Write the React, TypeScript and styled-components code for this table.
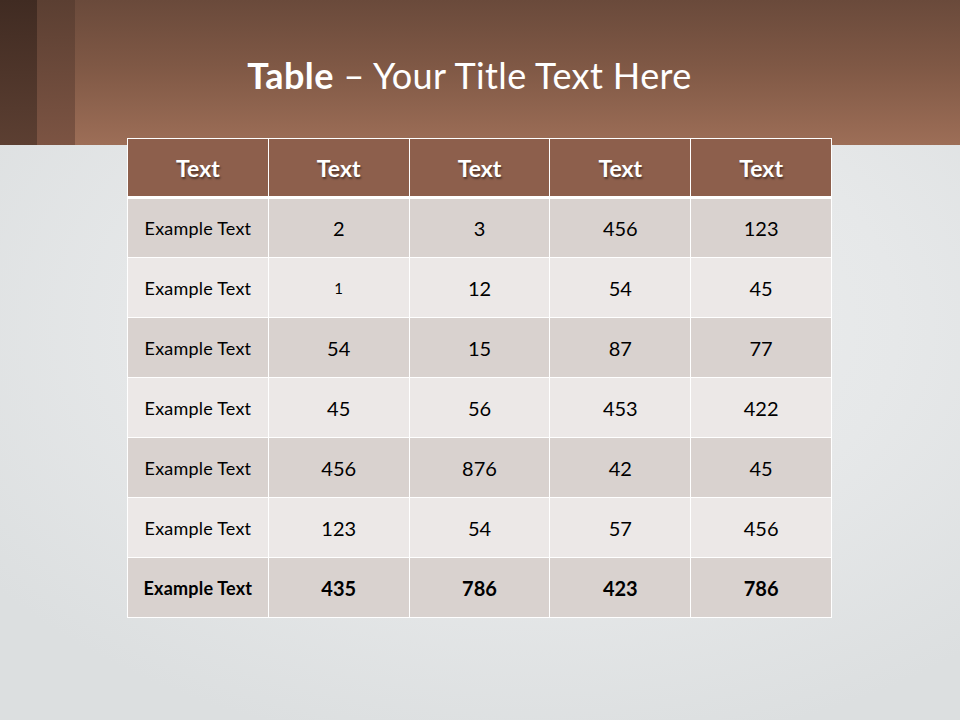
import styled, { createGlobalStyle } from "styled-components";

const GlobalStyle = createGlobalStyle`
  html, body {
    margin: 0;
    padding: 0;
  }
  body {
    font-family: Lato, "Open Sans", sans-serif;
  }
`;

const Slide = styled.div`
  width: 960px;
  height: 720px;
  overflow: hidden;
  display: flex;
  flex-direction: column;
  background: radial-gradient(ellipse 70% 60% at 55% 45%, #eef0f0 0%, #e6e8e9 55%, #dcdfe0 100%);
`;

const Band = styled.div`
  height: 145px;
  display: flex;
  background: linear-gradient(180deg, #6a4a3b 0%, #7f5845 45%, #9d6e57 100%);
`;

const Stripe = styled.div<{ $dark?: boolean }>`
  width: ${(p) => (p.$dark ? "37px" : "38px")};
  flex-shrink: 0;
  background: ${(p) =>
    p.$dark
      ? "linear-gradient(180deg, #402b22 0%, #5c3f32 100%)"
      : "linear-gradient(180deg, #5b3f32 0%, #7c5443 100%)"};
`;

const TitleArea = styled.div`
  flex: 1;
  display: flex;
  justify-content: center;
  padding-top: 54px;
  padding-right: 96px;
`;

const Title = styled.h1`
  margin: 0;
  font-size: 36px;
  line-height: 42px;
  font-weight: 400;
  color: #ffffff;
  letter-spacing: 0.4px;
  b {
    font-weight: 700;
  }
`;

const TableWrap = styled.div`
  margin-top: -7px;
  padding-left: 127px;
`;

const Grid = styled.table`
  border-collapse: collapse;
  table-layout: fixed;
  width: 705px;
  border: 1px solid #ffffff;
`;

const HeadCell = styled.th`
  height: 57px;
  padding: 0;
  background: #8d5f4c;
  color: #ffffff;
  font-size: 23px;
  font-weight: 700;
  text-shadow: 1px 2px 2px rgba(0, 0, 0, 0.45);
  border: 1px solid #ffffff;
  border-bottom: 3px solid #ffffff;
  text-align: center;
`;

const Row = styled.tr<{ $alt?: boolean }>`
  height: 60px;
  background: ${(p) => (p.$alt ? "#ece8e7" : "#d9d2cf")};
`;

const Cell = styled.td<{ $label?: boolean; $bold?: boolean; $small?: boolean }>`
  padding: 0;
  border: 1px solid #ffffff;
  text-align: center;
  color: #000000;
  font-size: ${(p) => (p.$label ? "18px" : p.$small ? "15px" : "20px")};
  font-weight: ${(p) => (p.$bold ? 700 : 400)};
  letter-spacing: ${(p) => (p.$label ? "0.2px" : "0")};
`;

const rows: string[][] = [
  ["2", "3", "456", "123"],
  ["1", "12", "54", "45"],
  ["54", "15", "87", "77"],
  ["45", "56", "453", "422"],
  ["456", "876", "42", "45"],
  ["123", "54", "57", "456"],
  ["435", "786", "423", "786"],
];

export default function App() {
  return (
    <Slide>
      <GlobalStyle />
      <Band>
        <Stripe $dark />
        <Stripe />
        <TitleArea>
          <Title>
            <b>Table</b> – Your Title Text Here
          </Title>
        </TitleArea>
      </Band>
      <TableWrap>
        <Grid>
          <thead>
            <tr>
              {[0, 1, 2, 3, 4].map((i) => (
                <HeadCell key={i}>Text</HeadCell>
              ))}
            </tr>
          </thead>
          <tbody>
            {rows.map((r, i) => {
              const last = i === rows.length - 1;
              return (
                <Row key={i} $alt={i % 2 === 1}>
                  <Cell $label $bold={last}>
                    Example Text
                  </Cell>
                  {r.map((v, j) => (
                    <Cell key={j} $bold={last} $small={i === 1 && j === 0}>
                      {v}
                    </Cell>
                  ))}
                </Row>
              );
            })}
          </tbody>
        </Grid>
      </TableWrap>
    </Slide>
  );
}
